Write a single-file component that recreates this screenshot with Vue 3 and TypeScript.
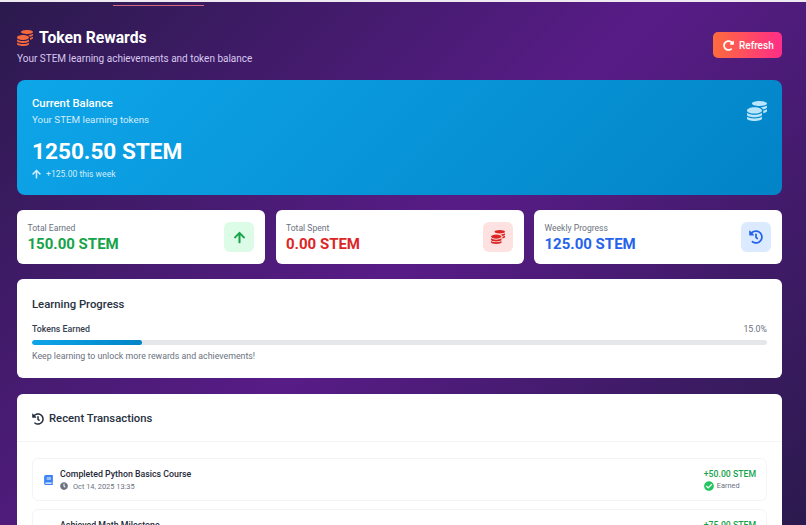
<script setup lang="ts">
const coins = "M0 405.3V448c0 35.3 86 64 192 64s192-28.7 192-64v-42.7C342.7 434.4 267.2 448 192 448S41.3 434.4 0 405.3zM320 128c106 0 192-28.7 192-64S426 0 320 0 128 28.7 128 64s86 64 192 64zM0 300.4V352c0 35.3 86 64 192 64s192-28.7 192-64v-51.6c-41.3 34-116.9 51.6-192 51.6S41.3 334.4 0 300.4zm416 11c57.3-11.1 96-31.7 96-55.4v-42.7c-23.2 16.4-57.3 27.6-96 34.5v63.6zM192 160C86 160 0 195.8 0 240s86 80 192 80 192-35.8 192-80-86-80-192-80zm219.3 56.3c60-10.8 100.7-32 100.7-56.3v-42.7c-35.5 25.1-96.5 38.6-160.7 41.8 29.5 14.3 51.2 33.5 60 57.2z";
const history = "M504 255.531c.253 136.64-111.18 248.372-247.82 248.468-59.015.042-113.223-20.53-155.822-54.911-11.077-8.94-11.905-25.541-1.839-35.607l11.267-11.267c8.609-8.609 22.353-9.551 31.891-1.984C173.062 425.135 212.781 440 256 440c101.705 0 184-82.311 184-184 0-101.705-82.311-184-184-184-48.814 0-93.149 18.969-126.068 49.932l50.754 50.754c10.08 10.08 2.941 27.314-11.313 27.314H24c-8.837 0-16-7.163-16-16V38.627c0-14.254 17.234-21.393 27.314-11.314l49.372 49.372C129.209 34.136 189.552 8 256 8c136.81 0 247.747 110.78 248 247.531zm-180.912 78.784l9.823-12.63c8.138-10.463 6.253-25.542-4.21-33.679L288 256.349V152c0-13.255-10.745-24-24-24h-16c-13.255 0-24 10.745-24 24v135.651l65.409 50.874c10.463 8.137 25.541 6.253 33.679-4.21z";
const arrowUp = "M34.9 289.5l-22.2-22.2c-9.4-9.4-9.4-24.6 0-33.9L207 39c9.4-9.4 24.6-9.4 33.9 0l194.3 194.3c9.4 9.4 9.4 24.6 0 33.9L413 289.4c-9.5 9.5-25 9.3-34.3-.4L264 168.6V456c0 13.3-10.7 24-24 24h-32c-13.3 0-24-10.7-24-24V168.6L69.2 289.1c-9.3 9.8-24.8 10-34.3.4z";
const redo = "M256.455 8c66.269.119 126.437 26.233 170.859 68.685l35.715-35.715C478.149 25.851 504 36.559 504 57.941V192c0 13.255-10.745 24-24 24H345.941c-21.382 0-32.09-25.851-16.971-40.971l41.75-41.75c-30.864-28.899-70.801-44.907-113.23-45.273-92.398-.798-170.283 73.977-169.484 169.442C88.764 348.009 162.184 424 256 424c41.127 0 79.997-14.678 110.629-41.556 4.743-4.161 11.906-3.908 16.368.553l39.662 39.662c4.872 4.872 4.631 12.815-.482 17.433C378.202 479.813 319.926 504 256 504 119.034 504 8.001 392.967 8 256.002 7.999 119.193 119.646 7.755 256.455 8z";
const book = "M448 360V24c0-13.3-10.7-24-24-24H96C43 0 0 43 0 96v320c0 53 43 96 96 96h328c13.3 0 24-10.7 24-24v-16c0-7.5-3.5-14.3-8.9-18.7-4.2-15.4-4.2-59.3 0-74.7 5.4-4.3 8.9-11.1 8.9-18.6zM128 134c0-3.3 2.7-6 6-6h212c3.3 0 6 2.7 6 6v20c0 3.3-2.7 6-6 6H134c-3.3 0-6-2.7-6-6v-20zm0 64c0-3.3 2.7-6 6-6h212c3.3 0 6 2.7 6 6v20c0 3.3-2.7 6-6 6H134c-3.3 0-6-2.7-6-6v-20zm253.4 250H96c-17.7 0-32-14.3-32-32 0-17.6 14.4-32 32-32h285.4c-1.9 17.1-1.9 46.9 0 64z";
const clock = "M256,8C119,8,8,119,8,256S119,504,256,504,504,393,504,256,393,8,256,8Zm92.49,313h0l-20,25a16,16,0,0,1-22.49,2.5h0l-67-49.72a40,40,0,0,1-15-31.23V112a16,16,0,0,1,16-16h32a16,16,0,0,1,16,16V256l58,42.5A16,16,0,0,1,348.49,321Z";
const check = "M504 256c0 136.967-111.033 248-248 248S8 392.967 8 256 119.033 8 256 8s248 111.033 248 248zM227.314 387.314l184-184c6.248-6.248 6.248-16.379 0-22.627l-22.627-22.627c-6.248-6.249-16.379-6.249-22.628 0L216 308.118l-70.059-70.059c-6.248-6.248-16.379-6.248-22.628 0l-22.627 22.627c-6.248 6.248-6.248 16.379 0 22.627l104 104c6.249 6.249 16.379 6.249 22.628.001z";

const stats = [
  { label: "Total Earned", value: "150.00 STEM", tone: "green", icon: arrowUp, box: "0 0 448 512", size: 13 },
  { label: "Total Spent", value: "0.00 STEM", tone: "red", icon: coins, box: "0 0 512 512", size: 14 },
  { label: "Weekly Progress", value: "125.00 STEM", tone: "blue", icon: history, box: "0 0 512 512", size: 14 },
];

const transactions = [
  { title: "Completed Python Basics Course", date: "Oct 14, 2025 13:35", amount: "+50.00 STEM" },
  { title: "Achieved Math Milestone", date: "Oct 12, 2025 09:20", amount: "+75.00 STEM" },
];

const progress = 15;
</script>

<template>
  <div class="page">
    <div class="tab-line"></div>

    <header class="head">
      <div>
        <h1 class="title">
          <svg class="title-icon" viewBox="0 0 512 512"><path :d="coins" /></svg>
          Token Rewards
        </h1>
        <p class="subtitle">Your STEM learning achievements and token balance</p>
      </div>
      <button class="refresh">
        <svg class="refresh-icon" viewBox="0 0 512 512"><path :d="redo" /></svg>
        Refresh
      </button>
    </header>

    <section class="balance">
      <div class="balance-top">
        <div>
          <h2 class="balance-title">Current Balance</h2>
          <p class="balance-sub">Your STEM learning tokens</p>
        </div>
        <svg class="balance-icon" viewBox="0 0 512 512"><path :d="coins" /></svg>
      </div>
      <div class="balance-amount">1250.50 STEM</div>
      <div class="balance-week">
        <svg class="week-icon" viewBox="0 0 448 512"><path :d="arrowUp" /></svg>
        +125.00 this week
      </div>
    </section>

    <section class="stats">
      <div v-for="s in stats" :key="s.label" class="stat">
        <div class="stat-text">
          <div class="stat-label">{{ s.label }}</div>
          <div class="stat-value" :class="s.tone">{{ s.value }}</div>
        </div>
        <div class="stat-icon" :class="s.tone">
          <svg :viewBox="s.box" :width="s.size" :height="s.size"><path :d="s.icon" /></svg>
        </div>
      </div>
    </section>

    <section class="card progress-card">
      <h3 class="card-title">Learning Progress</h3>
      <div class="progress-row">
        <span class="progress-label">Tokens Earned</span>
        <span class="progress-pct">15.0%</span>
      </div>
      <div class="track">
        <div class="fill" :style="{ width: progress + '%' }"></div>
      </div>
      <p class="progress-note">Keep learning to unlock more rewards and achievements!</p>
    </section>

    <section class="card tx-card">
      <div class="tx-head">
        <h3 class="card-title">
          <svg class="tx-head-icon" viewBox="0 0 512 512"><path :d="history" /></svg>
          Recent Transactions
        </h3>
      </div>
      <div class="tx-list">
        <div v-for="t in transactions" :key="t.title" class="tx">
          <svg class="tx-icon" viewBox="0 0 448 512"><path :d="book" /></svg>
          <div class="tx-main">
            <div class="tx-title">{{ t.title }}</div>
            <div class="tx-date">
              <svg class="tx-clock" viewBox="0 0 512 512"><path :d="clock" /></svg>
              {{ t.date }}
            </div>
          </div>
          <div class="tx-right">
            <div class="tx-amount">{{ t.amount }}</div>
            <div class="tx-status">
              <svg class="tx-check" viewBox="0 0 512 512"><path :d="check" /></svg>
              Earned
            </div>
          </div>
        </div>
      </div>
    </section>
  </div>
</template>

<style scoped>
.page {
  position: relative;
  box-sizing: border-box;
  height: 525px;
  overflow: hidden;
  padding: 25px 24px 0 17px;
  border-top: 2px solid #efe9f2;
  background: linear-gradient(135deg, #2b1a4d 0%, #581c87 50%, #2b1a4d 100%);
  font-family: Roboto, "Open Sans", sans-serif;
}
.tab-line {
  position: absolute;
  left: 113px;
  top: 3px;
  width: 91px;
  height: 1px;
  background: #d4667f;
}
svg {
  fill: currentColor;
  display: block;
  flex-shrink: 0;
}
.head {
  display: flex;
  justify-content: space-between;
  align-items: flex-start;
  height: 53px;
}
.title {
  display: flex;
  align-items: center;
  gap: 6px;
  margin: 0 0 2px;
  font-size: 15.7px;
  line-height: 22px;
  font-weight: 700;
  color: #fff;
}
.title-icon {
  width: 16px;
  height: 16px;
  color: #f4693c;
}
.subtitle {
  margin: 0;
  font-size: 10px;
  line-height: 15px;
  color: #d8c8f0;
}
.refresh {
  display: flex;
  align-items: center;
  gap: 5px;
  width: 69px;
  height: 26px;
  padding: 0 0 0 10px;
  margin-top: 5px;
  border: 0;
  border-radius: 5px;
  background: linear-gradient(90deg, #ff6b3d, #ff2d87);
  color: #fff;
  font: 500 10px Roboto, sans-serif;
}
.refresh-icon {
  width: 11px;
  height: 11px;
}
.balance {
  box-sizing: border-box;
  height: 115px;
  padding: 15px 15px 0;
  border-radius: 8px;
  background: linear-gradient(135deg, #0ea5e9, #0284c7);
  color: #fff;
}
.balance-top {
  display: flex;
  justify-content: space-between;
  align-items: center;
}
.balance-title {
  margin: 0;
  font-size: 11.3px;
  line-height: 17px;
  font-weight: 500;
}
.balance-sub {
  margin: 0;
  font-size: 9.8px;
  line-height: 15px;
  color: #d2ecfb;
}
.balance-icon {
  width: 20px;
  height: 20px;
  color: #bae6fd;
}
.balance-amount {
  margin-top: 9px;
  font-size: 22.6px;
  line-height: 32px;
  font-weight: 700;
}
.balance-week {
  display: flex;
  align-items: center;
  gap: 5px;
  font-size: 8.6px;
  line-height: 12px;
  color: #d2ecfb;
}
.week-icon {
  width: 9px;
  height: 10px;
}
.stats {
  display: grid;
  grid-template-columns: repeat(3, 1fr);
  gap: 10.5px;
  margin-top: 15px;
}
.stat {
  box-sizing: border-box;
  height: 54px;
  padding: 0 11px 0 10.5px;
  display: flex;
  justify-content: space-between;
  align-items: center;
  border-radius: 6px;
  background: #fff;
}
.stat-text {
  padding-top: 1px;
}
.stat-label {
  font-size: 8.6px;
  line-height: 12px;
  color: #6b7280;
}
.stat-value {
  margin-top: 1px;
  font-size: 15px;
  line-height: 19px;
  font-weight: 700;
}
.stat-value.green { color: #16a34a; }
.stat-value.red { color: #dc2626; }
.stat-value.blue { color: #2563eb; }
.stat-icon {
  display: flex;
  align-items: center;
  justify-content: center;
  width: 30px;
  height: 30px;
  border-radius: 6px;
}
.stat-icon.green { background: #dcfce7; color: #16a34a; }
.stat-icon.red { background: #fee2e2; color: #dc2626; }
.stat-icon.blue { background: #dbeafe; color: #2563eb; }
.card {
  border-radius: 6px;
  background: #fff;
}
.progress-card {
  box-sizing: border-box;
  height: 99px;
  margin-top: 15px;
  padding: 17px 15px 0;
}
.card-title {
  display: flex;
  align-items: center;
  gap: 5px;
  margin: 0;
  font-size: 11.3px;
  line-height: 18px;
  font-weight: 500;
  color: #27303f;
}
.progress-row {
  display: flex;
  justify-content: space-between;
  margin-top: 9px;
  font-size: 8.8px;
  line-height: 13px;
}
.progress-label {
  font-weight: 500;
  color: #374151;
}
.progress-pct {
  color: #6b7280;
}
.track {
  height: 5px;
  margin-top: 4px;
  border-radius: 3px;
  background: #e5e7eb;
  overflow: hidden;
}
.fill {
  height: 100%;
  border-radius: 3px;
  background: linear-gradient(90deg, #0ea5e9, #0284c7);
}
.progress-note {
  margin: 4px 0 0;
  font-size: 8.8px;
  line-height: 14px;
  color: #6b7280;
}
.tx-card {
  margin-top: 16px;
  height: 200px;
}
.tx-head {
  height: 48px;
  box-sizing: border-box;
  padding: 16px 15px 0;
  border-bottom: 1px solid #f3f4f6;
}
.tx-head-icon {
  width: 12px;
  height: 12px;
}
.tx-list {
  display: flex;
  flex-direction: column;
  gap: 8px;
  padding: 16px 15px 0;
}
.tx {
  box-sizing: border-box;
  height: 43px;
  flex-shrink: 0;
  display: flex;
  align-items: center;
  padding: 0 10px 0 11px;
  border: 1px solid #f3f4f6;
  border-radius: 6px;
}
.tx-icon {
  width: 9px;
  height: 10px;
  color: #3b82f6;
  margin-right: 7px;
}
.tx-main {
  flex: 1;
}
.tx-title {
  font-size: 8.8px;
  line-height: 13px;
  font-weight: 500;
  color: #1f2937;
}
.tx-date {
  display: flex;
  align-items: center;
  gap: 5px;
  font-size: 7.4px;
  line-height: 11px;
  color: #6b7280;
}
.tx-clock {
  width: 8px;
  height: 8px;
}
.tx-right {
  display: flex;
  flex-direction: column;
  align-items: flex-end;
}
.tx-amount {
  font-size: 8.7px;
  line-height: 12px;
  font-weight: 500;
  color: #16a34a;
}
.tx-status {
  display: flex;
  align-items: center;
  gap: 3px;
  align-self: flex-start;
  font-size: 7.4px;
  line-height: 11px;
  color: #6b7280;
}
.tx-check {
  width: 10px;
  height: 10px;
  color: #22c55e;
}
</style>
